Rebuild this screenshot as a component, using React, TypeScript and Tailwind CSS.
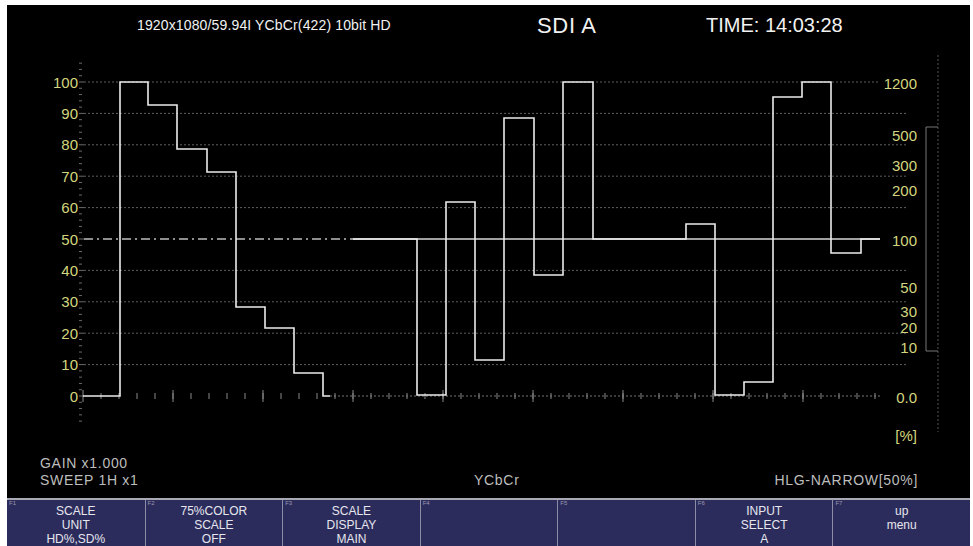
import React from "react";

const LABEL = "#d3d67e";
const GRID = "#5e5e5e";
const TRACE = "#ececec";

const yOf = (v: number) => 396 - v * 3.14;

const leftLabels = [100, 90, 80, 70, 60, 50, 40, 30, 20, 10, 0];
const rightLabels: { t: string; y: number }[] = [
  { t: "1200", y: 83 },
  { t: "500", y: 135 },
  { t: "300", y: 165 },
  { t: "200", y: 190 },
  { t: "100", y: 240 },
  { t: "50", y: 287 },
  { t: "30", y: 311 },
  { t: "20", y: 327 },
  { t: "10", y: 347 },
  { t: "0.0", y: 397 },
];

const lumaPath =
  "M83 396 L120 396 L120 82 L148 82 L148 105 L177 105 L177 149 L207 149 L207 172 L236 172 L236 307 L265 307 L265 328 L294 328 L294 373 L323 373 L323 396 L330 396";

const chromaPath =
  "M353 239 L417 239 L417 395 L446 395 L446 202 L475 202 L475 360 L504 360 L504 118 L534 118 L534 275 L563 275 L563 82 L593 82 L593 239 L686 239 L686 224 L715 224 L715 395 L744 395 L744 382 L773 382 L773 97 L802 97 L802 82 L831 82 L831 253 L861 253 L861 239 L880 239";

function Waveform() {
  const minor: number[] = [];
  for (let v = -8; v <= 106; v += 2) minor.push(v);
  const tTicks: number[] = [];
  for (let x = 101; x <= 880; x += 18) tTicks.push(x);
  const majors: number[] = [];
  for (let x = 83; x <= 880; x += 90) majors.push(x);

  return (
    <svg width={963} height={405} viewBox="7 45 963 405" className="block">
      {/* scale tick column */}
      {minor.map((v) => (
        <line key={"m" + v} x1={79} x2={v % 10 === 0 ? 84 : 82} y1={yOf(v)} y2={yOf(v)} stroke="#6a6a6a" strokeWidth={1} />
      ))}
      {/* graticule */}
      {[100, 90, 80, 70, 60, 40, 30, 20, 10].map((v) => (
        <line
          key={"g" + v}
          x1={84}
          x2={v === 100 ? 880 : 908}
          y1={yOf(v)}
          y2={yOf(v)}
          stroke={GRID}
          strokeWidth={1}
          strokeDasharray="2 2"
        />
      ))}
      {/* 50% centre line */}
      <line x1={84} x2={353} y1={239} y2={239} stroke="#bdbdbd" strokeWidth={1.3} strokeDasharray="9 4 2 4" />
      <line x1={353} x2={880} y1={239} y2={239} stroke="#d6d6d6" strokeWidth={1.4} />
      {/* zero line with time marks */}
      <line x1={330} x2={880} y1={396} y2={396} stroke="#777" strokeWidth={1} strokeDasharray="2 2" />
      {tTicks.map((x) => (
        <line key={"t" + x} x1={x} x2={x} y1={393} y2={399} stroke="#8a8a8a" strokeWidth={1} />
      ))}
      {majors.map((x) => (
        <line key={"M" + x} x1={x} x2={x} y1={390} y2={402} stroke="#8a8a8a" strokeWidth={1} />
      ))}
      {/* right side level bar */}
      <line x1={938} x2={938} y1={55} y2={432} stroke="#555" strokeWidth={1} strokeDasharray="2 2" />
      <path d="M938 127 L926 127 L926 351 L938 351" fill="none" stroke="#777" strokeWidth={1} />
      {/* traces */}
      <path d={lumaPath} fill="none" stroke={TRACE} strokeWidth={1.6} />
      <path d={chromaPath} fill="none" stroke={TRACE} strokeWidth={1.6} />
      {/* scale labels */}
      <g fontFamily="'Liberation Sans', Arial, sans-serif" fontSize={15} fill={LABEL}>
        {leftLabels.map((v) => (
          <text key={"l" + v} x={78} y={yOf(v) + 5.5} textAnchor="end">
            {v}
          </text>
        ))}
        {rightLabels.map((r) => (
          <text key={"r" + r.t} x={917} y={r.y + 5.5} textAnchor="end">
            {r.t}
          </text>
        ))}
        <text x={917} y={441} textAnchor="end">
          [%]
        </text>
      </g>
    </svg>
  );
}

const keys: { f: string; lines: string[] }[] = [
  { f: "F1", lines: ["SCALE", "UNIT", "HD%,SD%"] },
  { f: "F2", lines: ["75%COLOR", "SCALE", "OFF"] },
  { f: "F3", lines: ["SCALE", "DISPLAY", "MAIN"] },
  { f: "F4", lines: [] },
  { f: "F5", lines: [] },
  { f: "F6", lines: ["INPUT", "SELECT", "A"] },
  { f: "F7", lines: ["up", "menu"] },
];

export default function App() {
  return (
    <div
      className="w-[973px] h-[546px] overflow-hidden bg-white pt-[5px] pl-[7px] pr-[3px]"
      style={{ fontFamily: "'Liberation Sans', Arial, sans-serif" }}
    >
      <div className="flex h-full flex-col bg-black">
        {/* status header */}
        <div className="flex h-[40px] shrink-0 items-center pl-[130px] text-[#f2f2f2]">
          <span className="w-[400px] text-[14px] tracking-[0.01em]">1920x1080/59.94I YCbCr(422) 10bit HD</span>
          <span className="w-[169px] text-[22px] tracking-[0.03em]">SDI A</span>
          <span className="text-[20px]">TIME: 14:03:28</span>
        </div>

        {/* waveform display */}
        <div className="h-[405px] shrink-0">
          <Waveform />
        </div>

        {/* status footer */}
        <div className="flex h-[48px] shrink-0 items-end pb-[9px] text-[14px] leading-[17px] tracking-[0.05em] text-[#bdbdbd]">
          <div className="w-[467px] pl-[33px]">
            <div>GAIN x1.000</div>
            <div>SWEEP 1H x1</div>
          </div>
          <div>YCbCr</div>
          <div className="ml-auto pr-[52px]">HLG-NARROW[50%]</div>
        </div>

        {/* function keys */}
        <div className="grid h-[48px] shrink-0 grid-cols-7 border-t-2 border-[#a9a9b4] bg-[#2c2c5c]">
          {keys.map((k, i) => (
            <div
              key={k.f}
              className={`relative pt-[4px] text-center text-[12px] leading-[14px] text-[#e6e6ee] ${i > 0 ? "border-l border-[#8c8ca6]" : ""}`}
            >
              <span className="absolute left-[2px] top-[0px] text-[6px] leading-[7px] text-[#9a9ab0]">{k.f}</span>
              {k.lines.map((l) => (
                <div key={l}>{l}</div>
              ))}
            </div>
          ))}
        </div>
      </div>
    </div>
  );
}
